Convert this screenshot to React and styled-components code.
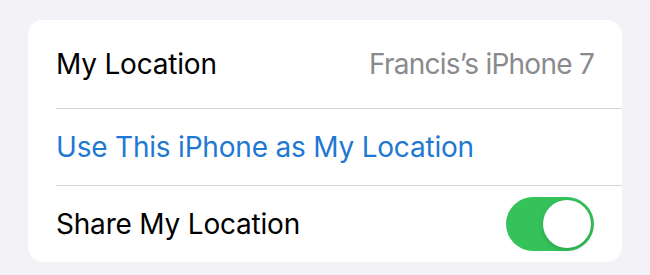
import React, { useState } from "react";
import styled, { createGlobalStyle } from "styled-components";

const GlobalStyle = createGlobalStyle`
  body {
    margin: 0;
    background: #f2f2f7;
    font-family: Inter, "Liberation Sans", Arial, sans-serif;
    -webkit-font-smoothing: antialiased;
  }
`;

const Page = styled.div`
  padding: 20px 28px;
`;

const Card = styled.div`
  background: #ffffff;
  border-radius: 15px;
  overflow: hidden;
`;

const Row = styled.div`
  display: flex;
  align-items: center;
  justify-content: space-between;
  height: ${({ $height }) => $height}px;
  margin-left: 28px;
  padding-right: 28px;
  border-bottom: ${({ $last }) => ($last ? "none" : "1px solid #d5d5d9")};
  box-sizing: border-box;
`;

const Label = styled.span`
  font-size: 28px;
  letter-spacing: -0.2px;
  color: ${({ $link }) => ($link ? "#1f78d1" : "#000000")};
`;

const Detail = styled.span`
  font-size: 28px;
  letter-spacing: -0.75px;
  color: #8a8a8e;
`;

const Switch = styled.button`
  position: relative;
  width: 88px;
  height: 54px;
  border: none;
  padding: 0;
  border-radius: 27px;
  background: ${({ $on }) => ($on ? "#35c25a" : "#e5e5ea")};
  cursor: pointer;
`;

const Knob = styled.span`
  position: absolute;
  top: 3px;
  left: ${({ $on }) => ($on ? "37px" : "3px")};
  width: 48px;
  height: 48px;
  border-radius: 50%;
  background: #ffffff;
  box-shadow: 0 2px 5px rgba(0, 0, 0, 0.15), 0 0 1px rgba(0, 0, 0, 0.1);
`;

const App = () => {
  const [sharing, setSharing] = useState(true);

  return (
    <>
      <GlobalStyle />
      <Page>
        <Card>
          <Row $height={89}>
            <Label>My Location</Label>
            <Detail>Francis’s iPhone 7</Detail>
          </Row>
          <Row $height={77}>
            <Label $link>Use This iPhone as My Location</Label>
          </Row>
          <Row $height={76} $last>
            <Label>Share My Location</Label>
            <Switch $on={sharing} onClick={() => setSharing(!sharing)}>
              <Knob $on={sharing} />
            </Switch>
          </Row>
        </Card>
      </Page>
    </>
  );
};

export default App;
